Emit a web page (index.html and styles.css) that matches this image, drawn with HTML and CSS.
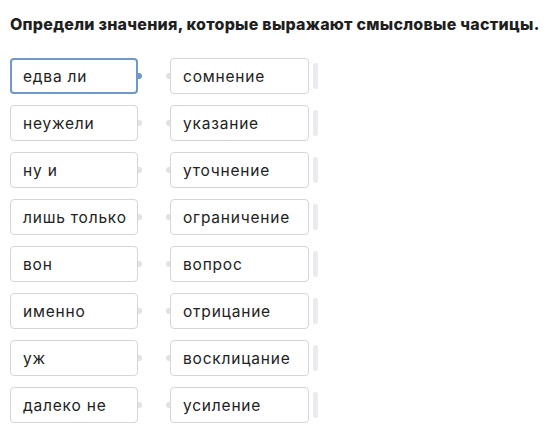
FILE: index.html
```html
<!DOCTYPE html>
<html lang="ru">
<head>
  <meta charset="UTF-8">
  <title>Смысловые частицы</title>
  <link rel="stylesheet" href="styles.css">
</head>
<body>
  <h2 class="title">Определи значения, которые выражают смысловые частицы.</h2>

  <div class="match">
    <div class="row">
      <div class="item left active">едва ли</div>
      <div class="item right">сомнение</div>
      <div class="bar"></div>
    </div>
    <div class="row">
      <div class="item left">неужели</div>
      <div class="item right">указание</div>
      <div class="bar"></div>
    </div>
    <div class="row">
      <div class="item left">ну и</div>
      <div class="item right">уточнение</div>
      <div class="bar"></div>
    </div>
    <div class="row">
      <div class="item left">лишь только</div>
      <div class="item right">ограничение</div>
      <div class="bar"></div>
    </div>
    <div class="row">
      <div class="item left">вон</div>
      <div class="item right">вопрос</div>
      <div class="bar"></div>
    </div>
    <div class="row">
      <div class="item left">именно</div>
      <div class="item right">отрицание</div>
      <div class="bar"></div>
    </div>
    <div class="row">
      <div class="item left">уж</div>
      <div class="item right">восклицание</div>
      <div class="bar"></div>
    </div>
    <div class="row">
      <div class="item left">далеко не</div>
      <div class="item right">усиление</div>
      <div class="bar"></div>
    </div>
  </div>
</body>
</html>
```

FILE: styles.css
```css
/* Estrutura geral */
body {
  margin: 0;
  padding: 14px 10px;
  background: #ffffff;
  font-family: Inter, "Liberation Sans", Arial, sans-serif;
  color: #222;
}

.title {
  margin: 0 0 24px 0;
  font-size: 16px;
  line-height: 20px;
  font-weight: 800;
  letter-spacing: 0.25px;
  white-space: nowrap;
  color: #1f1f1f;
}

.match {
  display: flex;
  flex-direction: column;
  gap: 11px;
}

.row {
  display: flex;
  align-items: center;
}

/* Caixas */
.item {
  position: relative;
  box-sizing: border-box;
  height: 36px;
  display: flex;
  align-items: center;
  padding-left: 12px;
  border: 1px solid #d6d6d6;
  border-radius: 4px;
  font-size: 15.5px;
  letter-spacing: 0.8px;
  white-space: nowrap;
  color: #222;
  background: #fff;
}

.left {
  width: 128px;
}

.right {
  width: 139px;
  margin-left: 32px;
}

.left::after,
.right::before {
  content: "";
  position: absolute;
  top: 50%;
  width: 4px;
  height: 6px;
  margin-top: -3px;
  background: #e2e2e2;
}

.left::after {
  right: -5px;
  border-radius: 0 3px 3px 0;
}

.right::before {
  left: -5px;
  border-radius: 3px 0 0 3px;
}

.left.active {
  border: 2px solid #6f97c9;
  padding-left: 11px;
}

.left.active::after {
  right: -6px;
  background: #6f97c9;
}

.bar {
  width: 5px;
  height: 26px;
  margin-left: 4px;
  border-radius: 2px;
  background: #e9ebee;
}
```
